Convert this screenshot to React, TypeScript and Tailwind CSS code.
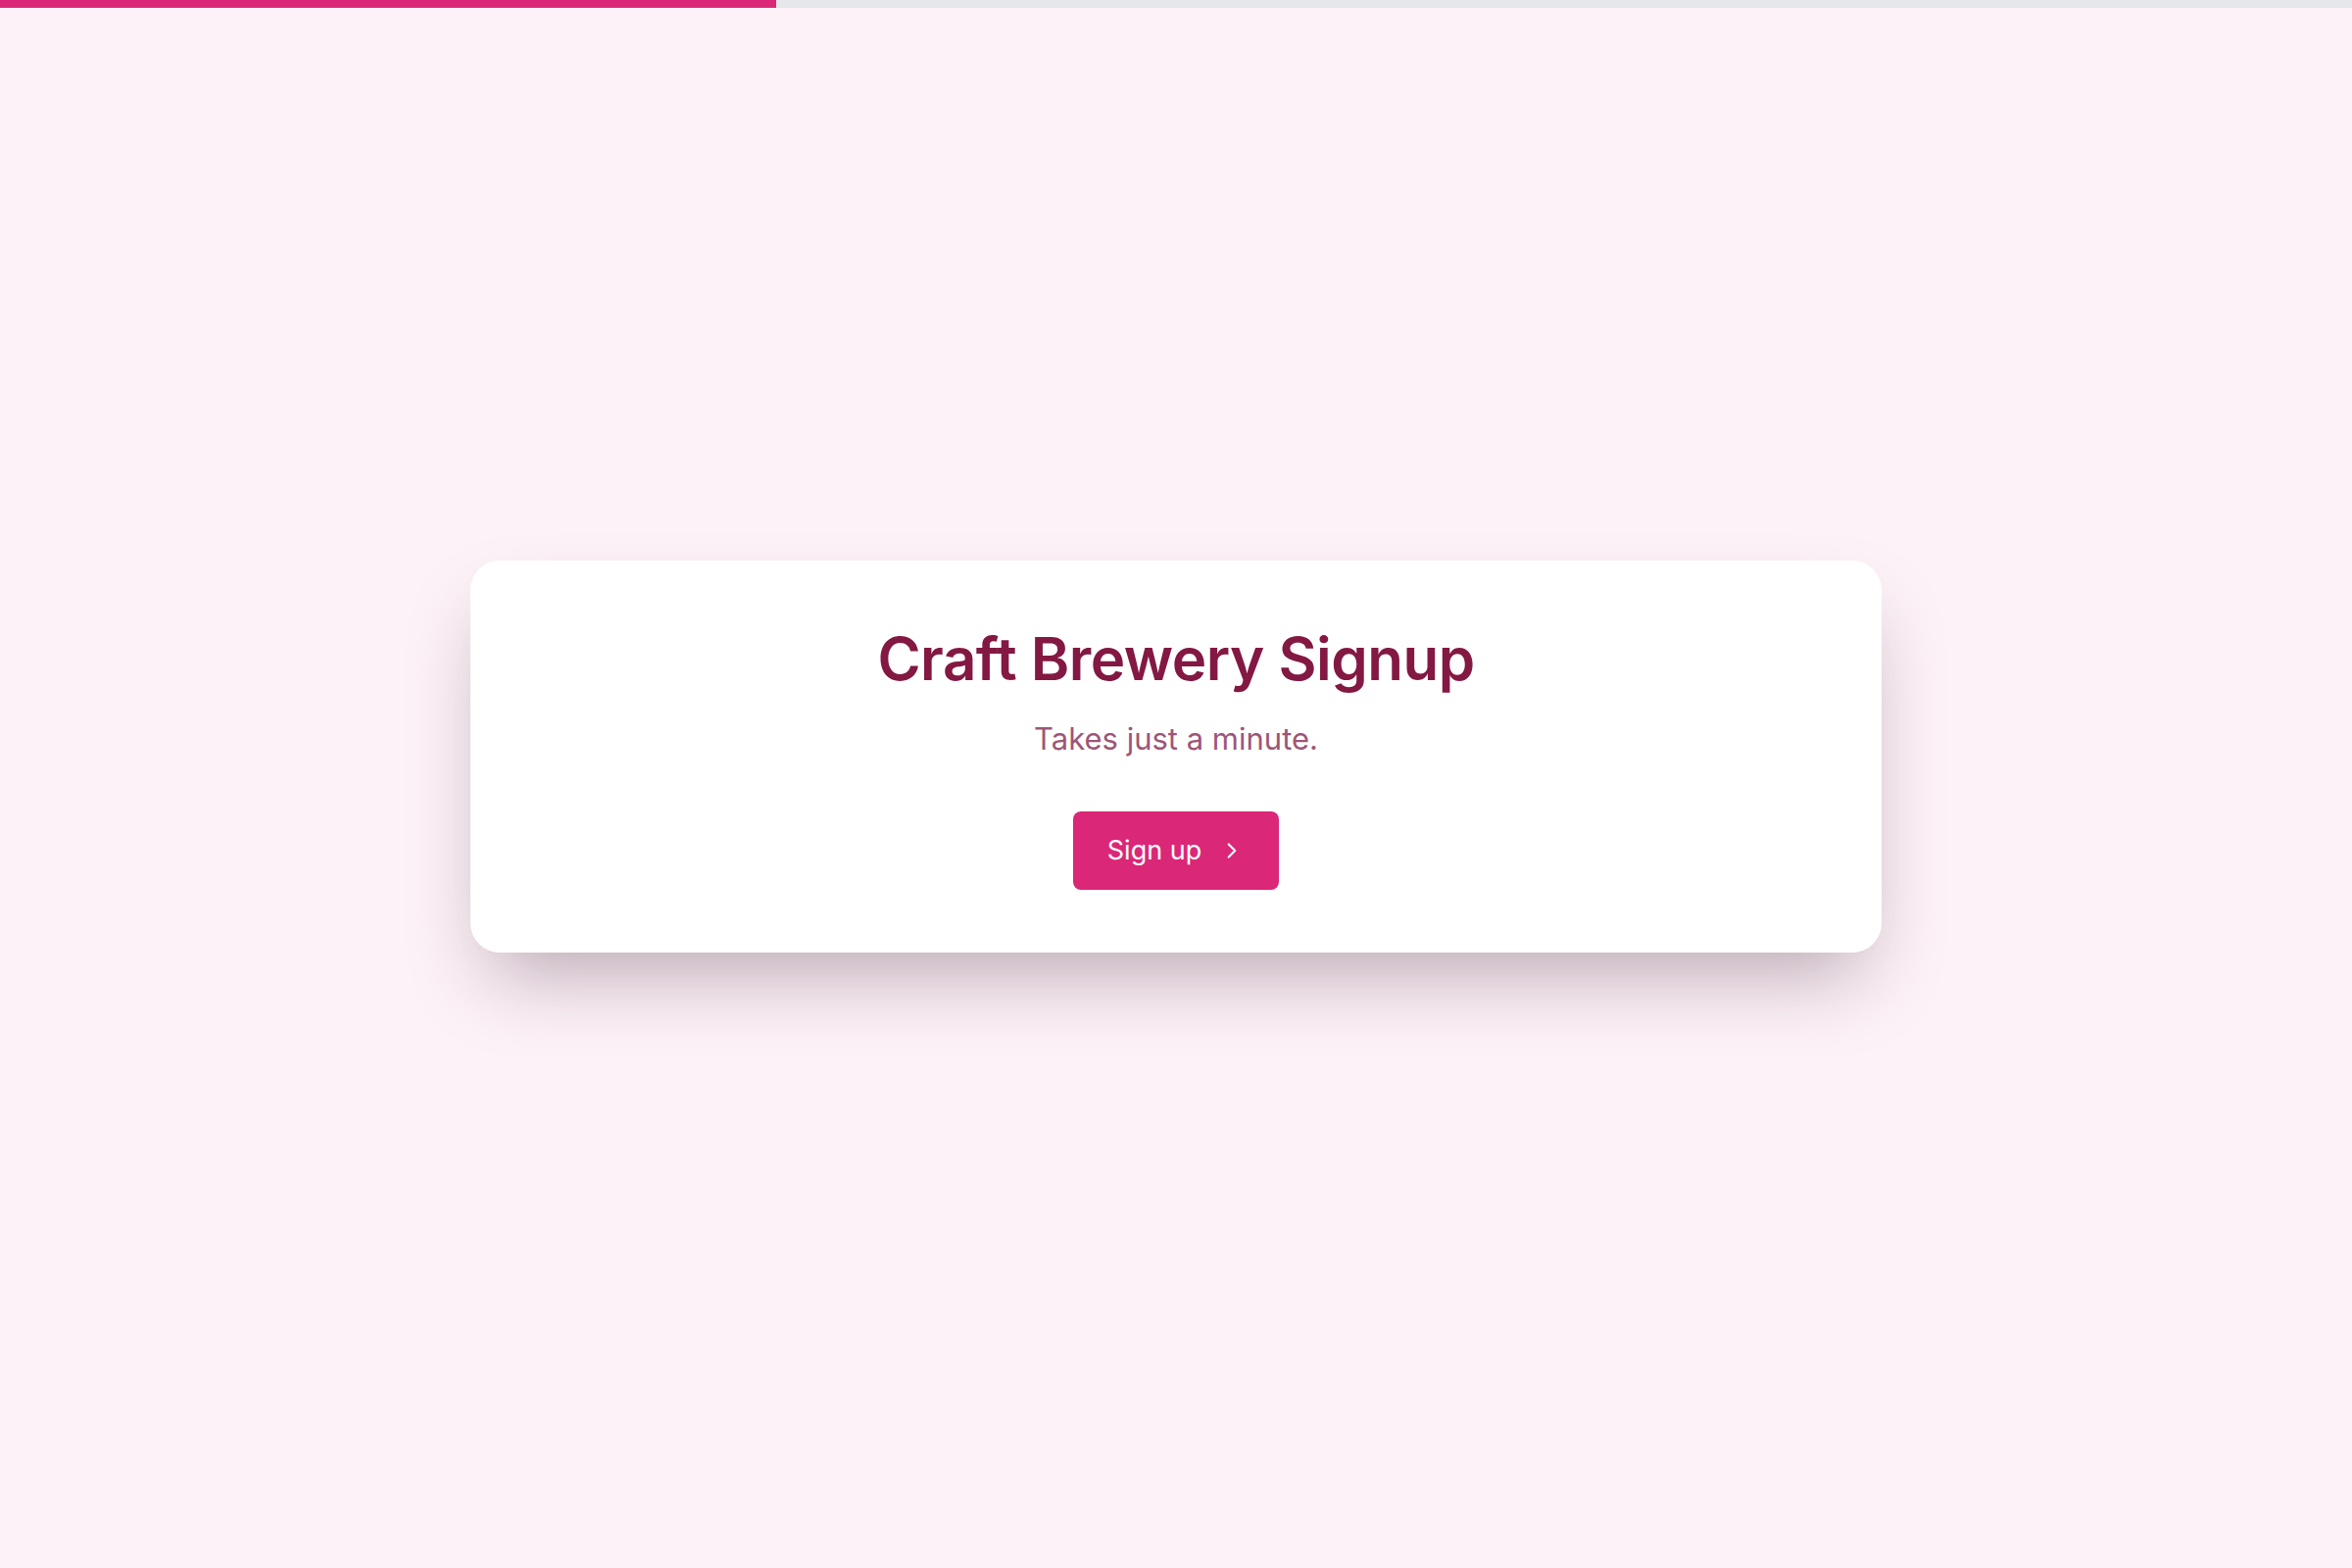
import React from 'react';
import { ChevronRight } from 'lucide-react';

export default function App() {
  return (
    <div
      className="min-h-screen flex flex-col bg-[#fdf2f8]"
      style={{ fontFamily: 'Inter, "Open Sans", sans-serif' }}
    >
      {/* Progress */}
      <div className="h-2 w-full bg-gray-200">
        <div className="h-full w-[33%] bg-[#db2777]" />
      </div>

      <main className="flex-1 flex items-center justify-center px-6 pb-16">
        <div className="w-full max-w-[1440px] h-[400px] bg-white rounded-[30px] shadow-[0_40px_80px_-20px_rgba(60,30,45,0.35)] flex flex-col items-center pt-[70px]">
          <h1 className="text-[60px] leading-[60px] font-semibold tracking-[-0.5px] text-[#831843]">
            Craft Brewery Signup
          </h1>
          <p className="mt-[34px] text-[31px] leading-[36px] text-[#9d5677]">
            Takes just a minute.
          </p>
          <button className="mt-[56px] h-[80px] flex items-center gap-[18px] px-[35px] rounded-lg bg-[#db2777] text-white text-[27px]">
            <span>Sign up</span>
            <ChevronRight size={26} strokeWidth={2} />
          </button>
        </div>
      </main>
    </div>
  );
}
